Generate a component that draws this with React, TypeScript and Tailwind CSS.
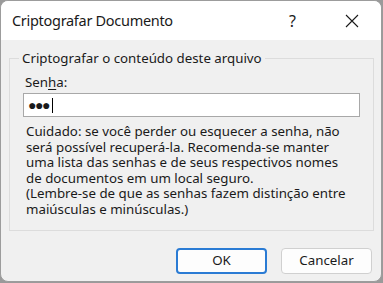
const lines = [
  "Cuidado: se você perder ou esquecer a senha, não",
  "será possível recuperá-la. Recomenda-se manter",
  "uma lista das senhas e de seus respectivos nomes",
  "de documentos em um local seguro.",
  "(Lembre-se de que as senhas fazem distinção entre",
  "maiúsculas e minúsculas.)",
];

export default function App() {
  return (
    <div className="w-[383px] h-[283px] bg-[#9a9a9a] overflow-hidden">
      <div
        className="w-[382px] h-[282px] bg-[#f0f0f0] rounded-t-lg rounded-b-lg border border-[#9c9c9c] flex flex-col overflow-hidden text-[#1a1a1a]"
        style={{ fontFamily: '"Noto Sans", "Open Sans", sans-serif' }}
      >
        {/* title bar */}
        <div className="h-[39px] bg-white flex items-center shrink-0">
          <span className="ml-[11px] text-[14.5px] tracking-[-0.3px]">Criptografar Documento</span>
          <span className="ml-auto mr-[49px] text-[16px]">?</span>
          <svg width="14" height="14" viewBox="0 0 14 14" className="mr-[22px]">
            <path d="M1 1 L13 13 M13 1 L1 13" stroke="#1a1a1a" strokeWidth="1.1" />
          </svg>
        </div>

        {/* body */}
        <div className="px-[8px] pt-[11px]">
          <fieldset className="border border-[#dcdcdc] h-[180px] w-[364px] px-[13px] pb-2">
            <legend className="-ml-[4px] px-[3px] text-[13.3px] leading-[15px]">
              Criptografar o conteúdo deste arquivo
            </legend>
            <div className="mt-[9px] ml-[2px] text-[13.3px] leading-[15px]">
              Sen<span className="underline underline-offset-2">h</span>a:
            </div>
            <div className="mt-[3px] w-[337px] h-[24px] bg-white border border-[#a8a8a8] flex items-center pl-[4px]">
              <span className="text-[14px] tracking-[-1.5px] leading-none">●●●</span>
              <span className="w-[1.5px] h-[15px] bg-black ml-[3px]" />
            </div>
            <div className="mt-[7px] ml-[3px] text-[13.3px] leading-[15.5px] whitespace-nowrap">
              {lines.map((l) => (
                <div key={l}>{l}</div>
              ))}
            </div>
          </fieldset>
        </div>

        {/* buttons */}
        <div className="flex justify-end gap-[14px] pr-[9px] mt-[17px]">
          <button className="w-[91px] h-[26px] rounded-[4px] border-2 border-[#2a7bd4] bg-[#fdfdfd] text-[13.3px]">
            OK
          </button>
          <button className="w-[91px] h-[26px] rounded-[4px] border border-[#d0d0d0] bg-[#fdfdfd] text-[13.3px]">
            Cancelar
          </button>
        </div>
      </div>
    </div>
  );
}
